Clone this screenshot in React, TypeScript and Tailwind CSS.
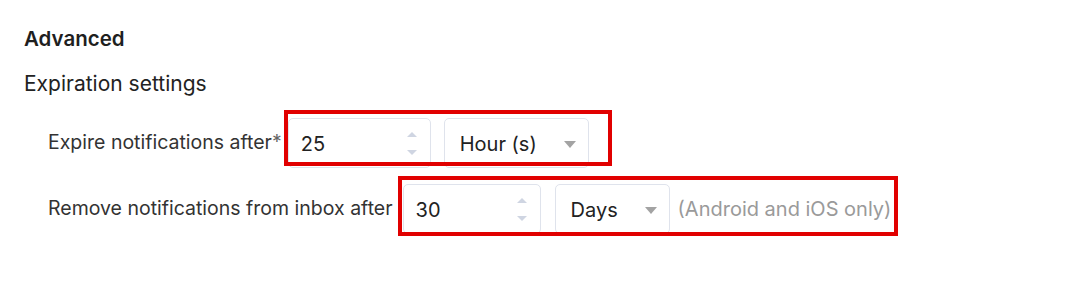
import React from "react";

function NumberBox({ value, width }: { value: string; width: string }) {
  return (
    <div className={`relative h-[50px] ${width} rounded-[5px] border border-[#dfe3ec] bg-white flex items-center pl-[12px] pt-[2px]`}>
      <span className="text-[20px] text-[#222]">{value}</span>
      <div className="absolute right-[13px] top-0 h-full flex flex-col justify-center gap-[13px]">
        <div className="w-0 h-0 border-l-[5px] border-r-[5px] border-b-[5px] border-l-transparent border-r-transparent border-b-[#cfd5e2]" />
        <div className="w-0 h-0 border-l-[5px] border-r-[5px] border-t-[5px] border-l-transparent border-r-transparent border-t-[#cfd5e2]" />
      </div>
    </div>
  );
}

function SelectBox({ value, width }: { value: string; width: string }) {
  return (
    <div className={`relative h-[50px] ${width} rounded-[5px] border border-[#dfe3ec] bg-white flex items-center pl-[15px] pt-[2px]`}>
      <span className="text-[20px] text-[#222]">{value}</span>
      <div className="absolute right-[12px] top-[22px] w-0 h-0 border-l-[6px] border-r-[6px] border-t-[7px] border-l-transparent border-r-transparent border-t-[#a3a3a3]" />
    </div>
  );
}

export default function App() {
  return (
    <div
      className="relative w-[1084px] h-[296px] bg-white overflow-hidden pl-6 pt-[25px] rounded-tl-[6px]"
      style={{ fontFamily: "Inter, 'Noto Sans', sans-serif" }}
    >
      <h2 className="text-[20.5px] leading-[28px] font-semibold text-[#1f1f1f]">Advanced</h2>
      <h3 className="mt-[17px] text-[21px] leading-[28px] text-[#222]">Expiration settings</h3>
      <div className="mt-[19px] pl-6 flex flex-col gap-4">
        <div className="flex items-center h-[50px] pt-[2px]">
          <span className="text-[19.5px] text-[#333] mr-[6px]">
            Expire notifications after<span className="text-[#666]">*</span>
          </span>
          <NumberBox value="25" width="w-[143px]" />
          <div className="w-[13px]" />
          <SelectBox value="Hour (s)" width="w-[145px]" />
        </div>
        <div className="flex items-center h-[50px] pt-[2px]">
          <span className="text-[19.5px] text-[#333] mr-[10px]">Remove notifications from inbox after</span>
          <NumberBox value="30" width="w-[138px]" />
          <div className="w-[14px]" />
          <SelectBox value="Days" width="w-[115px]" />
          <span className="ml-[8px] text-[20px] text-[#9a9a9a]">(Android and iOS only)</span>
        </div>
      </div>
      <div className="absolute left-[284px] top-[110px] w-[328px] h-[56px] border-4 border-[#e10000]" />
      <div className="absolute left-[398px] top-[176px] w-[500px] h-[60px] border-4 border-[#e10000]" />
    </div>
  );
}
